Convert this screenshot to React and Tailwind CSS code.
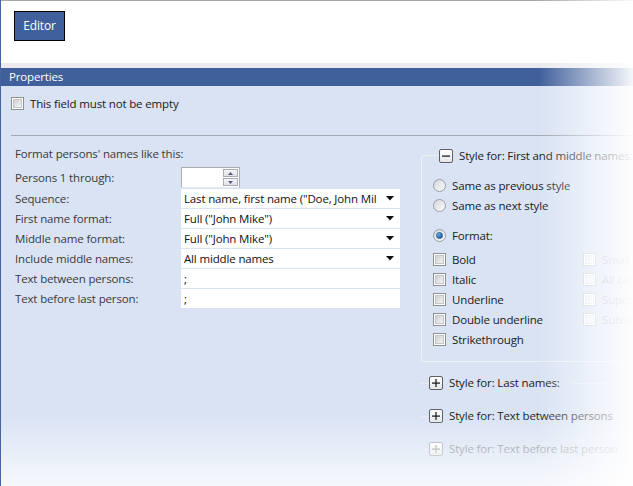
import React from "react";

const font = "font-['Segoe_UI','Open_Sans','Noto_Sans',sans-serif]";

function CheckBox({ disabled }) {
  return (
    <div
      className={`w-[13px] h-[13px] shrink-0 border p-[1px] bg-white ${
        disabled ? "border-[#c9cfd9]" : "border-[#8e8f8f]"
      }`}
    >
      <div
        className={`w-full h-full border bg-gradient-to-br ${
          disabled
            ? "border-[#e6e9ee] from-[#eceef2] to-[#f8f9fb]"
            : "border-[#c4c5c7] from-[#cfd0d2] to-[#f4f4f5]"
        }`}
      />
    </div>
  );
}

function Radio({ checked }) {
  return (
    <div className="w-[13px] h-[13px] shrink-0 rounded-full border border-[#9a9ea4] bg-gradient-to-br from-[#d6d8dc] to-[#fbfbfb] flex items-center justify-center">
      {checked && (
        <div className="w-[7px] h-[7px] rounded-full bg-gradient-to-br from-[#7fc5f5] to-[#0e4f94] border border-[#1d5a8c]" />
      )}
    </div>
  );
}

function Toggle({ open, faded }) {
  return (
    <div
      className={`w-[14px] h-[14px] shrink-0 rounded-[2px] border bg-gradient-to-b from-white to-[#e4e6ea] flex items-center justify-center ${
        faded ? "border-[#a4a8b0]" : "border-[#5c5f66]"
      }`}
    >
      <svg width="8" height="8" viewBox="0 0 8 8">
        <rect x="0" y="3.5" width="8" height="1.2" fill={faded ? "#9a9ea6" : "#111"} />
        {!open && <rect x="3.4" y="0" width="1.2" height="8" fill={faded ? "#9a9ea6" : "#111"} />}
      </svg>
    </div>
  );
}

function Select({ value }) {
  return (
    <div className="h-[19px] bg-white flex items-center pl-[3px] pr-[6px] text-[#111]">
      <span className="flex-1 whitespace-nowrap overflow-hidden">{value}</span>
      <svg width="8" height="5" viewBox="0 0 8 5" className="ml-[4px] shrink-0">
        <path d="M0 0h8L4 4.5z" fill="#111" />
      </svg>
    </div>
  );
}

function TextField({ value }) {
  return <div className="h-[19px] bg-white flex items-center pl-[3px] text-[#111]">{value}</div>;
}

function Spinner() {
  return (
    <div className="w-[59px] h-[21px] bg-white border border-[#abadb3] border-b-[#e3e9ef] flex justify-end items-center pr-[1px]">
      <div className="flex flex-col gap-[1px]">
        <div className="w-[15px] h-[8px] border border-[#a8acb4] bg-gradient-to-b from-[#f4f5f7] to-[#dfe2e7] flex items-center justify-center">
          <svg width="5" height="3" viewBox="0 0 5 3">
            <path d="M0 3h5L2.5 0z" fill="#4b5f84" />
          </svg>
        </div>
        <div className="w-[15px] h-[8px] border border-[#a8acb4] bg-gradient-to-b from-[#f4f5f7] to-[#dfe2e7] flex items-center justify-center">
          <svg width="5" height="3" viewBox="0 0 5 3">
            <path d="M0 0h5L2.5 3z" fill="#4b5f84" />
          </svg>
        </div>
      </div>
    </div>
  );
}

const rows = [
  ["Sequence:", <Select value={'Last name, first name ("Doe, John Mil'} />],
  ["First name format:", <Select value={'Full ("John Mike")'} />],
  ["Middle name format:", <Select value={'Full ("John Mike")'} />],
  ["Include middle names:", <Select value="All middle names" />],
  ["Text between persons:", <TextField value=";" />],
  ["Text before last person:", <TextField value=";" />],
];

function CollapsedHeader({ label, faded }) {
  return (
    <div className="flex items-center h-[14px]">
      <div className="w-[8px] h-px bg-[#e6ebf4]" />
      <Toggle faded={faded} />
      <span className={`ml-[6px] whitespace-nowrap ${faded ? "text-[#8a8e96]" : "text-[#1a1a1a]"}`}>{label}</span>
      <div className="flex-1 h-px bg-[#e6ebf4] ml-[12px]" />
    </div>
  );
}

export default function App() {
  return (
    <div
      className={`${font} text-[11.5px] tracking-[-0.15px] relative w-[633px] h-[486px] overflow-hidden bg-white flex flex-col border-l border-[#4664a2]`}
    >
      <div className="h-px bg-[#a6aaae] shrink-0" />
      <div className="h-[62px] shrink-0 pl-[13px] pt-[10px]">
        <div className="w-[51px] h-[30px] bg-[#3f5f9d] border border-black text-white text-[12px] flex items-center justify-center pb-px">
          Editor
        </div>
      </div>
      <div className="h-[5px] bg-[#ebebef] shrink-0" />
      <div className="h-[18px] bg-[#40609c] text-white pl-[8px] flex items-center shrink-0">Properties</div>

      <div className="flex-1 bg-[#d9e3f4] flex flex-col">
        <div className="flex items-center pl-[10px] pt-[11px] h-[24px]">
          <CheckBox />
          <span className="ml-[6px] text-[#1a1a1a]">This field must not be empty</span>
        </div>
        <div className="ml-[10px] mt-[25px] h-px bg-[#a3a8b2]" />

        <div className="flex pl-[14px]">
          <div className="w-[386px] flex flex-col">
            <div className="mt-[10px] h-[16px] flex items-center text-[#3a3a3a]">Format persons' names like this:</div>
            <div className="grid grid-cols-[166px_219px] mt-[5px] gap-y-[1px] text-[#3a3a3a]">
              <div className="h-[21px] flex items-center">Persons 1 through:</div>
              <Spinner />
              {rows.map(([label, field], i) => (
                <React.Fragment key={i}>
                  <div className="h-[19px] flex items-center">{label}</div>
                  {field}
                </React.Fragment>
              ))}
            </div>
          </div>

          <div className="flex-1 ml-[21px] flex flex-col">
            <fieldset className="mt-[11px] border border-[#edf1f8] rounded-[3px] h-[215px] pl-[11px]">
              <legend className="flex items-center ml-[6px] pr-[4px]">
                <Toggle open />
                <span className="ml-[6px] whitespace-nowrap text-[#1a1a1a]">Style for: First and middle names:</span>
              </legend>
              <div className="mt-[13px] flex flex-col gap-[4px] text-[#1a1a1a]">
                <div className="flex items-center h-[16px]">
                  <Radio />
                  <span className="ml-[6px]">Same as previous style</span>
                </div>
                <div className="flex items-center h-[16px]">
                  <Radio />
                  <span className="ml-[6px]">Same as next style</span>
                </div>
              </div>
              <div className="flex items-center h-[16px] mt-[14px] text-[#1a1a1a]">
                <Radio checked />
                <span className="ml-[6px]">Format:</span>
              </div>
              <div className="mt-[8px] flex text-[#1a1a1a]">
                <div className="w-[150px] flex flex-col gap-[4px]">
                  {["Bold", "Italic", "Underline", "Double underline", "Strikethrough"].map((t) => (
                    <div key={t} className="flex items-center h-[16px]">
                      <CheckBox />
                      <span className="ml-[6px]">{t}</span>
                    </div>
                  ))}
                </div>
                <div className="flex flex-col gap-[4px] text-[#a9afba]">
                  {["Small caps", "All caps", "Superscript", "Subscript"].map((t) => (
                    <div key={t} className="flex items-center h-[16px]">
                      <CheckBox disabled />
                      <span className="ml-[6px] whitespace-nowrap">{t}</span>
                    </div>
                  ))}
                </div>
              </div>
            </fieldset>
            <div className="mt-[14px] flex flex-col gap-[19px]">
              <CollapsedHeader label="Style for: Last names:" />
              <CollapsedHeader label="Style for: Text between persons" />
              <CollapsedHeader label="Style for: Text before last person" faded />
            </div>
          </div>
        </div>
        <div className="mt-auto mb-[9px] ml-[10px] h-px bg-[#e3e8f0]" />
      </div>

      <div className="pointer-events-none absolute top-0 right-0 h-full w-[94px] bg-gradient-to-r from-white/0 to-white/95" />
      <div className="pointer-events-none absolute bottom-0 left-0 w-full h-[72px] bg-gradient-to-b from-white/0 to-white/75" />
    </div>
  );
}
